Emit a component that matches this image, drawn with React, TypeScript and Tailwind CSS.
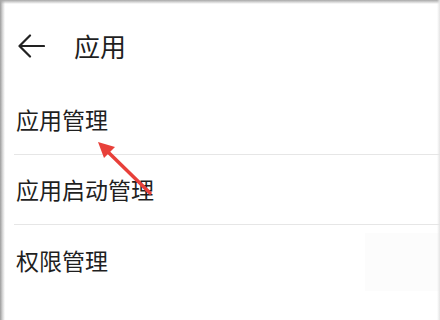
import React from "react";

const items = ["应用管理", "应用启动管理", "权限管理"];

export default function App() {
  return (
    <div
      className="relative w-[440px] h-[320px] overflow-hidden bg-white text-[#1f1f1f]"
      style={{ fontFamily: '"Noto Sans CJK SC", "Noto Sans", sans-serif' }}
    >
      {/* Header */}
      <div className="flex h-[85px] items-center pt-[7px] pl-[18px]">
        <svg width="27" height="24" viewBox="0 0 27 24" fill="none" stroke="#222" strokeWidth="2.2" strokeLinecap="round" strokeLinejoin="round">
          <path d="M26 12H2" />
          <path d="M12 1.5L1.5 12L12 22.5" />
        </svg>
        <span className="ml-[29px] text-[26px] leading-none">应用</span>
      </div>

      {/* List */}
      <div className="flex flex-col">
        {items.map((label, i) => (
          <div
            key={label}
            className={
              i < items.length - 1
                ? "ml-[14px] flex h-[70px] items-center border-b border-[#e6e6e6]"
                : "ml-[14px] flex h-[70px] items-center"
            }
          >
            <span className="ml-[2px] text-[23px] leading-none">{label}</span>
          </div>
        ))}
      </div>

      {/* faint block bottom right */}
      <div className="absolute left-[365px] top-[233px] h-[58px] w-[75px] bg-[#fcfcfc]" />

      {/* edge shadows */}
      <div className="absolute left-0 top-0 h-full w-[5px] bg-gradient-to-r from-[#9c9c9c] via-[#d4d4d4] to-transparent" />
      <div className="absolute left-0 top-0 h-[4px] w-full bg-gradient-to-b from-[#a8a8a8] to-transparent" />
      <div className="absolute right-0 top-0 h-full w-[3px] bg-gradient-to-l from-[#e4e4e4] to-transparent" />

      {/* Red annotation arrow */}
      <svg className="absolute left-0 top-0" width="440" height="320" viewBox="0 0 440 320">
        <line x1="150" y1="193" x2="106" y2="150" stroke="#e8403a" strokeWidth="3.5" strokeLinecap="round" />
        <polygon points="98,142 115,147 104,158" fill="#e8403a" />
      </svg>
    </div>
  );
}
